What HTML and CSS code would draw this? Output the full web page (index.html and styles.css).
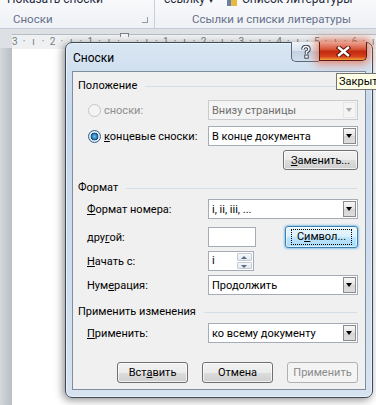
FILE: index.html
```html
<!DOCTYPE html>
<html lang="ru">
<head>
    <meta charset="UTF-8">
    <title>Сноски</title>
    <link rel="stylesheet" href="styles.css">
</head>
<body>
    <div class="word">
        <div class="ribbon">
            <div class="group group-notes">
                <div class="group-top"><span>Показать сноски</span></div>
                <div class="group-label">
                    <span>Сноски</span>
                    <span class="launcher"></span>
                </div>
            </div>
            <div class="group group-refs">
                <div class="group-top">
                    <span>ссылку ▾</span>
                    <span class="book"></span>
                    <span>Список литературы</span>
                </div>
                <div class="group-label"><span>Ссылки и списки литературы</span></div>
            </div>
        </div>

        <div class="ruler-bar">
            <div class="ruler">
                <span>3</span><span>·</span><span>ı</span><span>·</span>
                <span>2</span><span>·</span><span>ı</span><span>·</span>
                <span>1</span><span>·</span><span>ı</span><span>·</span>
                <span></span><span>·</span><span>ı</span><span>·</span>
                <span>1</span><span>·</span><span>ı</span><span>·</span>
                <span>2</span><span>·</span><span>ı</span><span>·</span>
                <span>3</span><span>·</span><span>ı</span><span>·</span>
                <span>4</span><span>·</span><span>ı</span><span>·</span>
                <span>5</span><span>·</span><span>ı</span><span>·</span>
                <span>6</span><span>·</span><span>ı</span>
                <i class="indent"></i>
            </div>
        </div>

        <div class="doc">
            <div class="doc-margin"></div>
            <div class="page"></div>
        </div>
    </div>

    <!-- dialog window floating over the document -->
    <div class="dialog">
        <div class="titlebar">
            <span class="caption">Сноски</span>
            <div class="caption-buttons">
                <span class="cap-btn help">
                    <svg width="12" height="14" viewBox="0 0 12 14">
                        <path d="M3 4.5 Q3 1.5 6 1.5 Q9 1.5 9 4.2 Q9 6 6.5 7 L6.5 9" fill="none" stroke="#2c3a4a" stroke-width="3.4"/>
                        <path d="M3 4.5 Q3 1.5 6 1.5 Q9 1.5 9 4.2 Q9 6 6.5 7 L6.5 9" fill="none" stroke="#fff" stroke-width="1.6"/>
                        <rect x="4.8" y="10" width="3.4" height="3.2" fill="#fff" stroke="#2c3a4a" stroke-width="0.9"/>
                    </svg>
                </span>
                <span class="cap-btn close">
                    <svg width="15" height="11" viewBox="0 0 15 11">
                        <path d="M3 1.8 L12 9.2 M12 1.8 L3 9.2" stroke="#5a1208" stroke-width="4.4" stroke-linecap="square"/>
                        <path d="M3 1.8 L12 9.2 M12 1.8 L3 9.2" stroke="#fff" stroke-width="2.4" stroke-linecap="square"/>
                    </svg>
                </span>
            </div>
        </div>

        <div class="client">
            <div class="section-head"><span>Положение</span><i></i></div>
            <div class="row first">
                <label class="radio-label disabled"><span class="radio"></span>сноски:</label>
                <div class="combo disabled"><span>Внизу страницы</span><span class="arrow"></span></div>
            </div>
            <div class="row">
                <label class="radio-label"><span class="radio checked"></span><span><u>к</u>онцевые сноски:</span></label>
                <div class="combo"><span>В конце документа</span><span class="arrow"></span></div>
            </div>
            <div class="row-right">
                <button class="btn btn-replace"><u>З</u>аменить...</button>
            </div>

            <div class="section-head format-head"><span>Формат</span><i></i></div>
            <div class="row first">
                <label><u>Ф</u>ормат номера:</label>
                <div class="combo"><span>i, ii, iii, ...</span><span class="arrow"></span></div>
            </div>
            <div class="row row-other">
                <label>дру<u>г</u>ой:</label>
                <div class="control-pair">
                    <div class="textbox"></div>
                    <button class="btn focused"><span class="focus-rect">С<u>и</u>мвол...</span></button>
                </div>
            </div>
            <div class="row row-start">
                <label><u>Н</u>ачать с:</label>
                <div class="spin">
                    <span>i</span>
                    <span class="spin-btns"><b class="up"></b><b class="down"></b></span>
                </div>
            </div>
            <div class="row row-num">
                <label>Нум<u>е</u>рация:</label>
                <div class="combo"><span>Продолжить</span><span class="arrow"></span></div>
            </div>

            <div class="section-head apply-head"><span>Применить изменения</span><i></i></div>
            <div class="row first">
                <label><u>П</u>рименить:</label>
                <div class="combo"><span>ко всему документу</span><span class="arrow"></span></div>
            </div>

            <div class="actions">
                <button class="btn">Вст<u>а</u>вить</button>
                <button class="btn">Отмена</button>
                <button class="btn disabled">Применить</button>
            </div>
        </div>
    </div>

    <div class="tooltip">Закрыть</div>
</body>
</html>
```

FILE: styles.css
```css
html, body {
    margin: 0;
    padding: 0;
}
body {
    width: 376px;
    height: 405px;
    overflow: hidden;
    position: relative;
    font-family: Roboto, "Liberation Sans", sans-serif;
    font-size: 11px;
    color: #000;
    background: #fff;
    white-space: nowrap;
}
u {
    text-decoration: underline;
    text-underline-offset: 1px;
}

/* ---- word background ---- */
.word {
    display: flex;
    flex-direction: column;
    height: 405px;
}
.ribbon {
    display: flex;
    height: 28px;
    background: linear-gradient(#f8f9fb, #eef1f5);
    border-bottom: 1px solid #c5ccd6;
}
.group {
    display: flex;
    flex-direction: column;
}
.group-notes {
    width: 154px;
    border-right: 1px solid #c9d0d9;
}
.group-refs {
    flex: 1;
}
.group-top {
    height: 6px;
    display: flex;
    align-items: flex-end;
    gap: 5px;
    overflow: hidden;
    font-size: 12px;
    line-height: 13px;
    color: #1e2a3c;
}
.group-notes .group-top { padding-left: 7px; }
.group-refs .group-top { padding-left: 9px; }
.book {
    width: 10px;
    height: 10px;
    margin-left: 8px;
    background: linear-gradient(90deg, #6b7fa8 0 4px, #e7b93e 4px);
}
.group-label {
    flex: 1;
    display: flex;
    align-items: center;
    justify-content: space-between;
    color: #66708a;
    font-size: 11.5px;
    padding-top: 3px;
}
.group-notes .group-label { padding-left: 13px; padding-right: 6px; }
.group-refs .group-label { padding-left: 37px; }
.launcher {
    width: 5px;
    height: 5px;
    border-right: 1px solid #8e98a6;
    border-bottom: 1px solid #8e98a6;
    margin-top: 2px;
}

.ruler-bar {
    height: 19px;
    background: #dde1e6;
    padding: 5px 0 0 12px;
    box-sizing: border-box;
}
.ruler {
    position: relative;
    height: 14px;
    display: flex;
    background: #eef0f2;
    border-top: 1px solid #b6bcc4;
    color: #777d85;
    font-size: 10px;
    line-height: 13px;
}
.ruler span {
    width: 9.45px;
    flex: none;
    text-align: center;
}
.ruler span:first-child {
    margin-left: -2px;
}
.indent {
    position: absolute;
    left: 108px;
    top: -2px;
    width: 7px;
    height: 6px;
    background: #f4f4f4;
    border: 1px solid #7c828a;
    border-bottom: none;
    clip-path: polygon(0 0, 100% 0, 100% 50%, 50% 100%, 0 50%);
}
.doc {
    flex: 1;
    display: flex;
}
.doc-margin {
    width: 12px;
    background: linear-gradient(90deg, #d4d8dc, #b9bec4);
}
.page {
    flex: 1;
    background: #fff;
}

/* ---- dialog ---- */
.dialog {
    position: absolute;
    left: 65px;
    top: 42px;
    width: 308px;
    height: 356px;
    box-sizing: border-box;
    border: 1px solid #3f4956;
    border-radius: 7px;
    background: linear-gradient(#d9e6f3, #c6d8ec 18%, #cbdcee 45%, #d6e2ef);
    box-shadow: 0 0 0 1px rgba(255,255,255,0.5) inset, -2px 2px 8px rgba(0,0,0,0.45);
    padding: 0 6px 7px 6px;
    display: flex;
    flex-direction: column;
}
.titlebar {
    height: 28px;
    display: flex;
    justify-content: space-between;
    align-items: flex-start;
}
.caption {
    margin: 8px 0 0 1px;
    font-size: 12px;
}
.caption-buttons {
    display: flex;
    margin-right: -1px;
    margin-top: -1px;
}
.cap-btn {
    display: flex;
    align-items: center;
    justify-content: center;
    border: 1px solid #5b6878;
    border-top: none;
}
.help {
    width: 27px;
    height: 19px;
    border-radius: 0 0 0 5px;
    border-right: none;
    background: linear-gradient(#eef3f8, #d8e3ef 45%, #c2d1e2 50%, #d3deea);
}
.close {
    width: 46px;
    height: 18px;
    border-radius: 0 0 5px 0;
    border-color: #5a1d12;
    background: linear-gradient(#eda293, #d7563a 40%, #c22a10 52%, #d4401c 80%, #f3a13a);
    box-shadow: 0 0 8px 3px rgba(236, 96, 56, 0.7);
}
.client {
    flex: 1;
    background: #f0f0f0;
    border: 1px solid #7f8d9c;
    padding: 6px 7px 0 5px;
    display: flex;
    flex-direction: column;
}

.section-head {
    height: 16px;
    display: flex;
    align-items: center;
    gap: 8px;
    line-height: 16px;
}
.section-head i {
    flex: 1;
    height: 1px;
    background: #d5dee6;
    margin-right: 1px;
}
.format-head { margin-top: 10px; }
.apply-head { margin-top: 9px; }

.row {
    display: grid;
    grid-template-columns: 121px 150px;
    align-items: center;
    height: 20px;
    margin-top: 6px;
    padding-left: 9px;
}
.format-head + .row.first,
.apply-head + .row.first { margin-top: 3px; }
.row-other { margin-top: 7px; }
.row-start { margin-top: 5px; }
.row-num { margin-top: 4px; }

.radio-label {
    display: flex;
    align-items: center;
    gap: 3px;
    margin-left: 1px;
}
.radio-label.disabled { color: #8d8d8d; }
.radio {
    width: 11px;
    height: 11px;
    border-radius: 50%;
    border: 1px solid #8e8f8f;
    background: radial-gradient(circle at 40% 35%, #ffffff, #e2e2e2);
}
.disabled .radio {
    border-color: #c5c5c5;
    background: #f4f4f4;
}
.radio.checked {
    border-color: #2c628b;
    background: radial-gradient(circle, #6fc6ee 0, #2a7fbf 2.5px, #173e6c 3.6px, #e8eef3 4.2px, #c9d4dc 100%);
}

.combo {
    height: 20px;
    box-sizing: border-box;
    border: 1px solid #a5acb5;
    background: #fff;
    display: flex;
    align-items: center;
    justify-content: space-between;
    padding-left: 3px;
}
.combo.disabled {
    background: #f4f4f4;
    border-color: #c8cbcf;
    color: #6f6f6f;
}
.arrow {
    width: 13px;
    height: 16px;
    margin-right: 1px;
    border: 1px solid #8a8a8a;
    box-sizing: border-box;
    background: linear-gradient(#f7f7f7, #e4e4e4 50%, #d5d5d5 51%, #dedede);
    position: relative;
}
.arrow::after {
    content: "";
    position: absolute;
    left: 2px;
    top: 5px;
    border-left: 3.5px solid transparent;
    border-right: 3.5px solid transparent;
    border-top: 4px solid #000;
}
.disabled .arrow {
    border-color: #e6e6e6;
    background: #f4f4f4;
}
.disabled .arrow::after {
    border-top-color: #a9a9a9;
}

.control-pair {
    display: flex;
    align-items: center;
    justify-content: space-between;
}
.textbox {
    width: 48px;
    height: 20px;
    box-sizing: border-box;
    border: 1px solid #a5acb5;
    background: #fff;
}
.spin {
    width: 46px;
    height: 20px;
    box-sizing: border-box;
    border: 1px solid #a5acb5;
    background: #fff;
    display: flex;
    justify-content: space-between;
    padding-left: 3px;
    line-height: 18px;
}
.spin-btns {
    width: 15px;
    display: flex;
    flex-direction: column;
    gap: 1px;
    padding: 1px 1px 1px 0;
}
.spin-btns b {
    flex: 1;
    border: 1px solid #c4cdd6;
    border-radius: 1px;
    background: linear-gradient(#f6f8fa, #e3e8ee);
    position: relative;
}
.spin-btns b::after {
    content: "";
    position: absolute;
    left: 3px;
    border-left: 3px solid transparent;
    border-right: 3px solid transparent;
}
.spin-btns .up::after { top: 2px; border-bottom: 3px solid #5a6d84; }
.spin-btns .down::after { top: 2px; border-top: 3px solid #5a6d84; }

.btn {
    width: 71px;
    height: 21px;
    padding: 0;
    font: inherit;
    color: #000;
    border: 1px solid #707070;
    border-radius: 3px;
    background: linear-gradient(#f2f2f2, #ebebeb 50%, #dddddd 51%, #cfcfcf);
    box-shadow: inset 0 0 0 1px rgba(255,255,255,0.7);
}
.row-right {
    display: flex;
    justify-content: flex-end;
    margin-top: 4px;
}
.btn-replace {
    width: 75px;
    height: 20px;
}
.btn.focused {
    width: 73px;
    height: 22px;
    border-color: #3c7fb1;
    background: linear-gradient(#eaf6fd, #d9f0fc 50%, #bee6fd 51%, #a7d9f5);
    box-shadow: 0 0 2px 1px rgba(60, 160, 230, 0.55), inset 0 0 0 1px rgba(255,255,255,0.6);
    display: flex;
    align-items: center;
    justify-content: center;
}
.focus-rect {
    border: 1px dotted #000;
    padding: 0 5px;
    line-height: 14px;
}
.btn.disabled {
    color: #8a8a8a;
    border-color: #adb2b5;
    background: #f4f4f4;
    box-shadow: none;
}
.actions {
    display: flex;
    justify-content: flex-end;
    gap: 14px;
    margin-top: 19px;
}

/* ---- tooltip ---- */
.tooltip {
    position: absolute;
    left: 336px;
    top: 73px;
    height: 17px;
    box-sizing: border-box;
    border: 1px solid #767676;
    background: #ffffe6;
    padding: 0 2px;
    line-height: 15px;
    font-size: 11px;
}
```
